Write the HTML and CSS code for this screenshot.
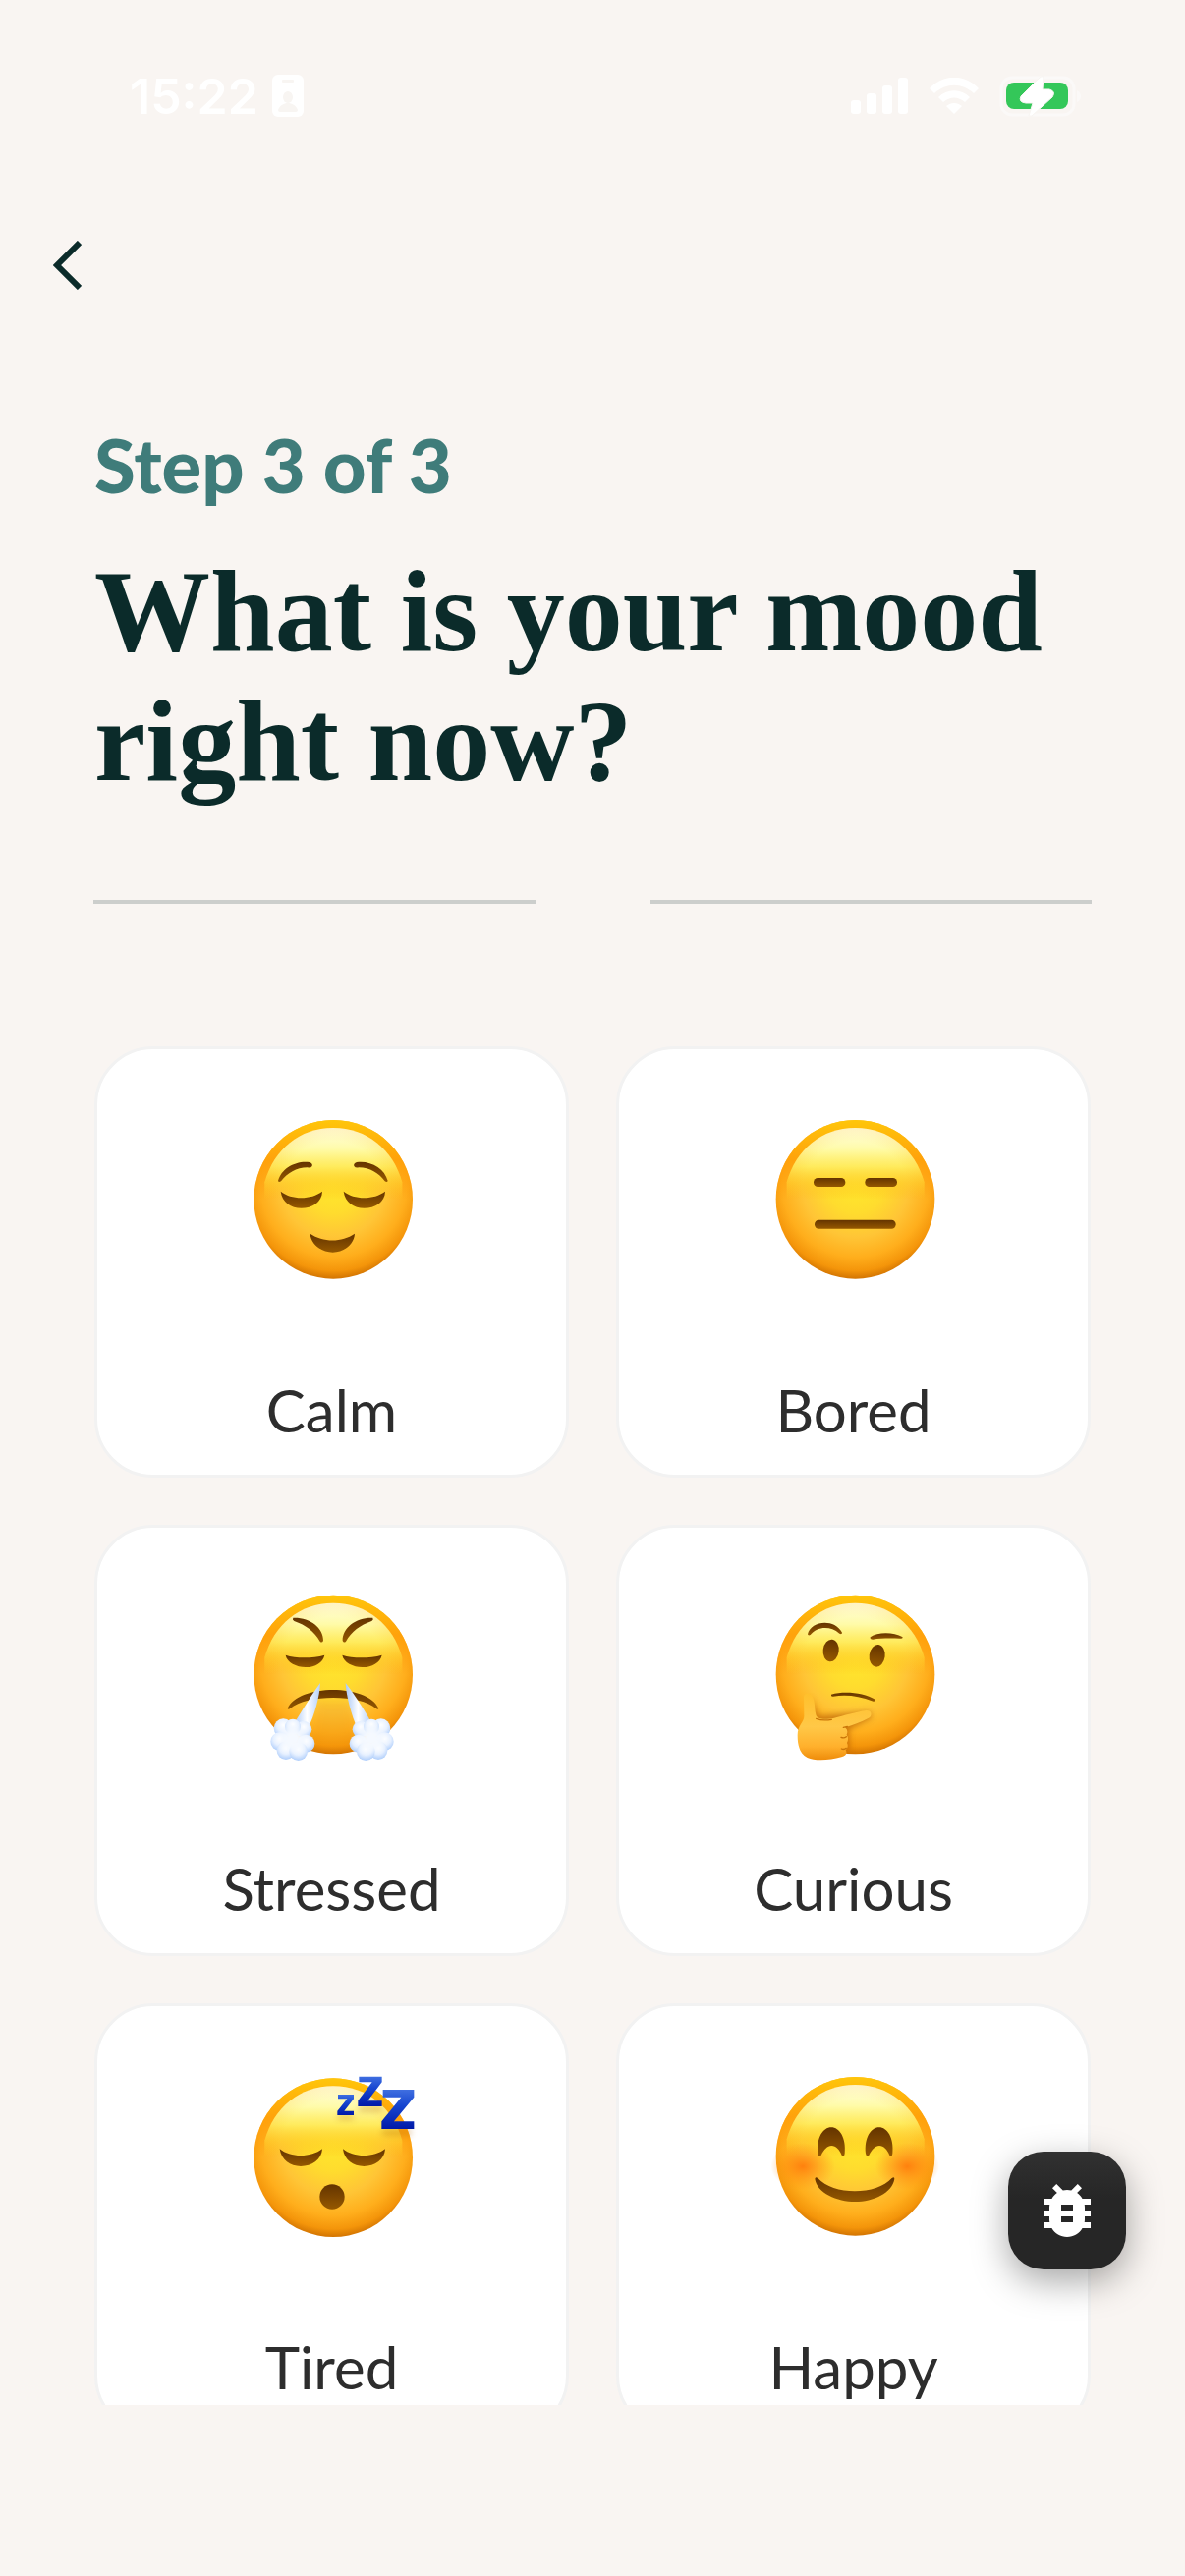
FILE: index.html
```html
<!DOCTYPE html>
<html lang="en">
<head>
<meta charset="UTF-8" />
<meta name="viewport" content="width=device-width, initial-scale=1" />
<title>What is your mood right now?</title>
<link rel="stylesheet" href="styles.css">
</head>
<body>

<!-- Shared face and gradients for the mood icons -->
<svg class="defs" aria-hidden="true">
  <defs>
    <radialGradient id="base" gradientUnits="userSpaceOnUse" cx="298" cy="255" r="295">
      <stop offset="0" stop-color="#ffe82c" />
      <stop offset="0.3" stop-color="#ffdc2e" />
      <stop offset="0.55" stop-color="#ffc536" />
      <stop offset="0.76" stop-color="#ffae1c" />
      <stop offset="0.9" stop-color="#f4950a" />
      <stop offset="1" stop-color="#cc6e00" />
    </radialGradient>
    <linearGradient id="rim" x1="0" y1="0" x2="0" y2="1">
      <stop offset="0" stop-color="#ffc60a" />
      <stop offset="0.25" stop-color="#ffa008" stop-opacity="0.9" />
      <stop offset="0.5" stop-color="#ff9408" stop-opacity="0" />
    </linearGradient>
    <linearGradient id="shine" gradientUnits="userSpaceOnUse" x1="0" y1="84" x2="0" y2="300">
      <stop offset="0" stop-color="#fffde0" />
      <stop offset="0.3" stop-color="#fffba8" />
      <stop offset="0.55" stop-color="#fff66a" stop-opacity="0.85" />
      <stop offset="0.78" stop-color="#ffee40" stop-opacity="0.4" />
      <stop offset="1" stop-color="#ffe82c" stop-opacity="0" />
    </linearGradient>
    <radialGradient id="side" gradientUnits="userSpaceOnUse" cx="297" cy="290" r="220">
      <stop offset="0.75" stop-color="#ffb820" stop-opacity="0" />
      <stop offset="1" stop-color="#ffb820" stop-opacity="0.4" />
    </radialGradient>
    <linearGradient id="brown" x1="0" y1="0" x2="0" y2="1">
      <stop offset="0" stop-color="#643400" />
      <stop offset="1" stop-color="#955800" />
    </linearGradient>
    <radialGradient id="blush">
      <stop offset="0" stop-color="#ff7a0a" stop-opacity="0.9" />
      <stop offset="1" stop-color="#ff8c0a" stop-opacity="0" />
    </radialGradient>
    <linearGradient id="blue" x1="0" y1="0" x2="0" y2="1">
      <stop offset="0" stop-color="#3f6ee0" />
      <stop offset="0.4" stop-color="#1746d0" />
      <stop offset="1" stop-color="#0019a8" />
    </linearGradient>
    <linearGradient id="steam" x1="0" y1="0" x2="1" y2="0">
      <stop offset="0" stop-color="#a9c8f8" />
      <stop offset="0.5" stop-color="#ffffff" />
      <stop offset="1" stop-color="#b4d0fa" />
    </linearGradient>
    <radialGradient id="puff" cx="0.5" cy="0.35" r="0.7">
      <stop offset="0" stop-color="#ffffff" />
      <stop offset="0.5" stop-color="#e6f0ff" />
      <stop offset="1" stop-color="#a6c8fa" />
    </radialGradient>
    <linearGradient id="hand" x1="0" y1="0" x2="0" y2="1">
      <stop offset="0" stop-color="#ffc02c" />
      <stop offset="0.5" stop-color="#ffc847" />
      <stop offset="0.8" stop-color="#ffb02c" />
      <stop offset="1" stop-color="#ee8c0a" />
    </linearGradient>
    <filter id="soft" x="-30%" y="-30%" width="160%" height="160%">
      <feGaussianBlur stdDeviation="9" />
    </filter>
    <symbol id="face" viewBox="0 0 600 600">
      <circle cx="297.5" cy="302.5" r="242.5" fill="url(#base)" />
      <circle cx="297.5" cy="302.5" r="242.5" fill="url(#rim)" />
      <path d="M297 84C400 84 480 150 508 250V300H88V250C116 150 195 84 297 84Z" fill="url(#shine)" />
      <path d="M297 84C400 84 480 150 508 250V300H88V250C116 150 195 84 297 84Z" fill="url(#side)" opacity="0.5" />
    </symbol>
    <g id="puffs">
      <g fill="url(#puff)">
        <circle cx="145" cy="462" r="29" />
        <circle cx="207" cy="466" r="25" />
        <circle cx="134" cy="503" r="28" />
        <circle cx="214" cy="509" r="27" />
        <circle cx="153" cy="530" r="28" />
        <circle cx="191" cy="533" r="28" />
        <circle cx="174" cy="458" r="24" />
      </g>
      <circle cx="174" cy="494" r="38" fill="#f5f9ff" filter="url(#soft)" />
    </g>
  </defs>
</svg>

<header class="status-bar">
  <div class="status-left">
    <span class="time">15:22</span>
    <svg class="id-badge" viewBox="0 0 32 43" aria-hidden="true">
      <rect width="32" height="43" rx="6" fill="#fff" />
      <rect x="10" y="5" width="12" height="3" rx="1" fill="#f8f5f2" />
      <ellipse cx="16" cy="23" rx="5" ry="6" fill="#f8f5f2" />
      <path d="M6 36C8 31 12 29 16 29S24 31 26 36Q26 38 24 38H8Q6 38 6 36Z" fill="#f8f5f2" />
    </svg>
  </div>
  <div class="status-right">
    <svg class="signal" viewBox="0 0 58 37" aria-hidden="true">
      <rect x="0" y="23" width="10" height="14" rx="3" />
      <rect x="16" y="16" width="10" height="21" rx="3" />
      <rect x="32" y="8" width="10" height="29" rx="3" />
      <rect x="48" y="0" width="10" height="37" rx="3" />
    </svg>
    <svg class="wifi" viewBox="0 0 50 37" aria-hidden="true">
      <path d="M0 11C14-4 36-4 50 11L45 16C33 5 17 5 5 16Z" />
      <path d="M9 20C18 11 32 11 41 20L36 25C29 19 21 19 14 25Z" />
      <path d="M17 29C22 25 28 25 33 29L25 37Z" />
    </svg>
    <svg class="battery" viewBox="0 0 82 40" aria-hidden="true">
      <rect x="1" y="1" width="74" height="38" rx="11" fill="none" stroke="#fbf9f8" stroke-width="3" />
      <path d="M78 14Q82 16 82 20T78 26Z" fill="#fbf9f8" />
      <rect x="6" y="6" width="63" height="27" rx="8" fill="#34c759" />
      <path d="M44 0L43 13H50Q57 15 53 21L32 40H29L33 27H26Q18 26 21 20L40 1Q42-1 44 0Z" fill="#fff" stroke="#f8f5f2" stroke-width="1" />
    </svg>
  </div>
</header>

<nav class="top-nav">
  <button class="back-btn" type="button" aria-label="Back">
    <svg viewBox="0 0 29 50" aria-hidden="true"><path d="M27 2L4 25L27 48" /></svg>
  </button>
</nav>

<main class="content">
  <p class="step">Step 3 of 3</p>
  <h1>What is your mood right now?</h1>
  <div class="dividers"><span></span><span></span></div>

  <div class="moods">
    <button class="mood" type="button">
      <svg viewBox="-6 0 600 600" aria-hidden="true">
        <use href="#face" width="600" height="600" />
        <g fill="url(#brown)">
          <path d="M129 246C139 207 184 183 225 189Q236 193 233 201Q229 207 219 205C184 205 158 222 138 247Q131 252 129 246Z" />
          <path d="M464 246C454 207 410 183 369 189Q358 193 361 201Q365 207 375 205C410 205 436 222 455 247Q462 252 464 246Z" />
          <path d="M137 278C169 304 230 304 264 278C263 311 233 329 200 329C168 329 142 312 137 278Z" />
          <path d="M329 278C361 304 422 304 456 278C455 311 425 329 392 329C360 329 334 312 329 278Z" />
          <path d="M227 407C266 434 324 434 363 407C361 441 328 464 296 464C264 464 229 441 227 407Z" />
        </g>
      </svg>
      <span>Calm</span>
    </button>

    <button class="mood" type="button">
      <svg viewBox="-4 0 600 600" aria-hidden="true">
        <use href="#face" x="3" width="600" height="600" />
        <g fill="url(#brown)">
          <rect x="173" y="237" width="97" height="27" rx="13" />
          <rect x="330" y="237" width="98" height="27" rx="13" />
          <rect x="176" y="365" width="248" height="27" rx="13" />
        </g>
      </svg>
      <span>Bored</span>
    </button>

    <button class="mood" type="button">
      <svg viewBox="-6 6 600 600" aria-hidden="true">
        <use href="#face" y="-4" width="600" height="600" />
        <g fill="url(#brown)">
          <path d="M175 125C225 123 268 155 267 195Q263 203 257 197C239 166 214 148 178 135Q171 130 175 125Z" />
          <path d="M418 125C368 123 325 155 326 195Q330 203 336 197C354 166 379 148 415 135Q422 130 418 125Z" />
          <path d="M152 239C185 250 235 249 271 239C266 263 240 277 213 276C185 276 156 261 152 239Z" />
          <path d="M325 239C358 250 410 249 446 239C441 263 413 277 386 276C358 276 329 261 325 239Z" />
          <path d="M158 402C190 326 404 326 436 402Q434 407 428 402C380 358 216 358 166 402Q160 407 158 402Z" />
        </g>
        <path d="M252 380L232 500H366L345 380Z" fill="#e28a08" opacity="0.18" filter="url(#soft)" />
        <path d="M258 324C256 365 240 425 221 461L177 448C202 410 231 360 258 324Z" fill="url(#steam)" />
        <path d="M335 324C337 365 354 425 370 461L411 440C391 405 362 358 335 324Z" fill="url(#steam)" />
        <use href="#puffs" />
        <use href="#puffs" transform="translate(588 0) scale(-1 1)" />
      </svg>
      <span>Stressed</span>
    </button>

    <button class="mood" type="button">
      <svg viewBox="-4 6 600 600" aria-hidden="true">
        <use href="#face" x="3" y="-4" width="600" height="600" />
        <g fill="url(#brown)">
          <path d="M155 175C164 135 235 125 260 170Q260 177 252 173C222 147 183 153 163 177Q156 180 155 175Z" />
          <path d="M346 184C368 168 416 167 445 184Q445 190 436 188C407 187 376 187 354 191Q344 191 346 184Z" />
          <ellipse cx="226" cy="225" rx="24" ry="34" transform="rotate(7 226 225)" />
          <ellipse cx="367" cy="241" rx="24" ry="34" transform="rotate(7 367 241)" />
          <path d="M227 359C268 347 327 354 361 374Q363 381 355 380C310 364 275 359 233 365Q225 366 227 359Z" />
        </g>
        <path d="M165 365L190 425L345 412L350 430L280 466L282 530L180 500Z" fill="#a95000" opacity="0.6" filter="url(#soft)" />
        <path d="M143 366C145 354 160 353 168 362C178 379 175 400 180 421C184 438 214 436 236 431C264 424 304 412 334 408C350 407 354 423 341 431C318 444 291 452 269 460Q280 468 274 482Q282 493 275 507Q281 519 271 529Q279 544 258 550C222 560 178 563 154 552C130 540 124 513 124 484C124 453 145 443 144 424Z" fill="url(#hand)" />
        <path d="M181 433C191 437 210 439 228 436" class="hand-line" />
        <path d="M273 488C268 492 262 492 257 490M273 523C268 527 262 527 258 525M264 460L276 457" class="hand-line" />
      </svg>
      <span>Curious</span>
    </button>

    <button class="mood" type="button">
      <svg viewBox="-6 12 600 600" aria-hidden="true">
        <use href="#face" y="16" width="600" height="600" />
        <g fill="url(#brown)">
          <path d="M134 292C166 319 230 319 264 292C262 326 232 345 198 345C166 345 139 326 134 292Z" />
          <path d="M327 292C359 319 422 319 456 292C454 326 424 345 391 345C358 345 331 326 327 292Z" />
          <circle cx="294" cy="438" r="38" />
        </g>
        <path d="M312 190H360V202H312ZM375 163H447V178H375ZM447 233H535V250H447Z" fill="#b76b00" opacity="0.4" filter="url(#soft)" />
        <g fill="url(#blue)">
          <path d="M312 126H360V139L331 176H360V189H310V176L340 139H312Z" />
          <path d="M376 71H446V88L403 145H446V162H373V145L416 88H376Z" />
          <path d="M449 111H544V134L483 208H544V231H445V208L505 134H449Z" />
        </g>
      </svg>
      <span>Tired</span>
    </button>

    <button class="mood" type="button">
      <svg viewBox="-4 12 600 600" aria-hidden="true">
        <use href="#face" x="3" y="12" width="600" height="600" />
        <ellipse cx="140" cy="345" rx="98" ry="72" fill="url(#blush)" />
        <ellipse cx="459" cy="345" rx="98" ry="72" fill="url(#blush)" />
        <g fill="url(#brown)">
          <path d="M186 306C181 258 202 226 227 226S273 258 268 306Q266 320 259 311C252 294 241 282 228 282S205 294 196 311Q189 319 186 306Z" />
          <path d="M332 306C327 258 348 226 373 226S419 258 414 306Q412 320 405 311C398 294 387 282 374 282S351 294 342 311Q335 319 332 306Z" />
          <path d="M177 383Q178 375 186 381C232 434 366 434 412 381Q420 375 420 383C414 426 355 453 300 453S183 426 177 383Z" />
        </g>
      </svg>
      <span>Happy</span>
    </button>
  </div>
</main>

<button class="debug-btn" type="button" aria-label="Report a bug">
  <svg viewBox="0 0 24 24" aria-hidden="true">
    <path d="M20 8h-2.810c-.45-.78-1.070-1.450-1.820-1.960L17 4.410 15.590 3l-2.170 2.170C12.960 5.060 12.490 5 12 5c-.49 0-.96.06-1.410.17L8.410 3 7 4.410l1.620 1.630C7.880 6.550 7.260 7.220 6.810 8H4v2h2.090c-.05.33-.09.66-.09 1v1H4v2h2v1c0 .34.04.67.09 1H4v2h2.810c1.040 1.790 2.970 3 5.190 3s4.150-1.210 5.190-3H20v-2h-2.090c.05-.33.09-.66.09-1v-1h2v-2h-2v-1c0-.34-.04-.67-.09-1H20V8zm-6 8h-4v-2h4v2zm0-4h-4v-2h4v2z" />
  </svg>
</button>

</body>
</html>
```
FILE: styles.css
```css
* {
  box-sizing: border-box;
}
body {
  margin: 0;
  height: 100vh;
  padding-bottom: 174px;
  display: flex;
  flex-direction: column;
  background: #f9f5f2;
  color: #2d2d2d;
  font-family: Lato, 'Open Sans', sans-serif;
}
button {
  border: none;
  padding: 0;
  font: inherit;
  color: inherit;
  cursor: pointer;
}
svg {
  display: block;
}
.defs {
  position: absolute;
  width: 0;
  height: 0;
}

/* Status bar */
.status-bar {
  flex: none;
  height: 180px;
  padding: 15px 106px 0 132px;
  display: flex;
  align-items: center;
  justify-content: space-between;
  color: #fff;
}
.status-left,
.status-right {
  display: flex;
  align-items: center;
}
.status-left {
  gap: 14px;
}
.status-right {
  gap: 22px;
}
.time {
  font-family: Inter, sans-serif;
  font-size: 50px;
  font-weight: 600;
  line-height: 60px;
}
.id-badge {
  width: 32px;
  height: 43px;
}
.signal {
  width: 58px;
  height: 37px;
  fill: #fff;
}
.wifi {
  width: 50px;
  height: 37px;
  fill: #fff;
}
.battery {
  width: 82px;
  height: 40px;
  overflow: visible;
}

/* Navigation */
.top-nav {
  flex: none;
  height: 180px;
  padding-left: 30px;
  display: flex;
  align-items: center;
}
.back-btn {
  background: none;
  padding: 24px;
}
.back-btn svg {
  width: 29px;
  height: 50px;
  fill: none;
  stroke: #0b2b2a;
  stroke-width: 6px;
}

/* Content */
.content {
  flex: 1;
  min-height: 0;
  overflow: hidden;
  padding: 67px 96px 0;
}
.step {
  margin: 0 0 38px;
  font-size: 76px;
  font-weight: 900;
  line-height: 92px;
  color: #3f7c7a;
}
h1 {
  margin: 0;
  font-family: 'Liberation Serif', serif;
  font-size: 118px;
  font-weight: 700;
  line-height: 132px;
  color: #0b2b2a;
}
.dividers {
  display: flex;
  gap: 117px;
  margin: 95px -1px 145px;
}
.dividers span {
  flex: 1;
  height: 4px;
  background: #cccecc;
}

/* Mood cards */
.moods {
  display: grid;
  grid-template-columns: 1fr 1fr;
  gap: 48px;
}
.mood {
  display: flex;
  flex-direction: column;
  align-items: center;
  gap: 79px;
  padding: 52px 0 30px;
  background: #fff;
  border: 3px solid #f2f2f2;
  border-radius: 60px;
  font-size: 60px;
  line-height: 72px;
}
.mood svg {
  width: 200px;
  height: 200px;
  overflow: visible;
}
.hand-line {
  fill: none;
  stroke: #c87408;
  stroke-width: 4px;
  stroke-linecap: round;
}

/* Floating debug button */
.debug-btn {
  position: fixed;
  right: 60px;
  bottom: 312px;
  width: 120px;
  height: 120px;
  display: flex;
  align-items: center;
  justify-content: center;
  background: linear-gradient(#313131, #262626 40%);
  border-radius: 36px;
  box-shadow: 0 12px 36px rgba(0, 0, 0, 0.35);
}
.debug-btn svg {
  width: 72px;
  height: 72px;
  fill: #fff;
}
```
